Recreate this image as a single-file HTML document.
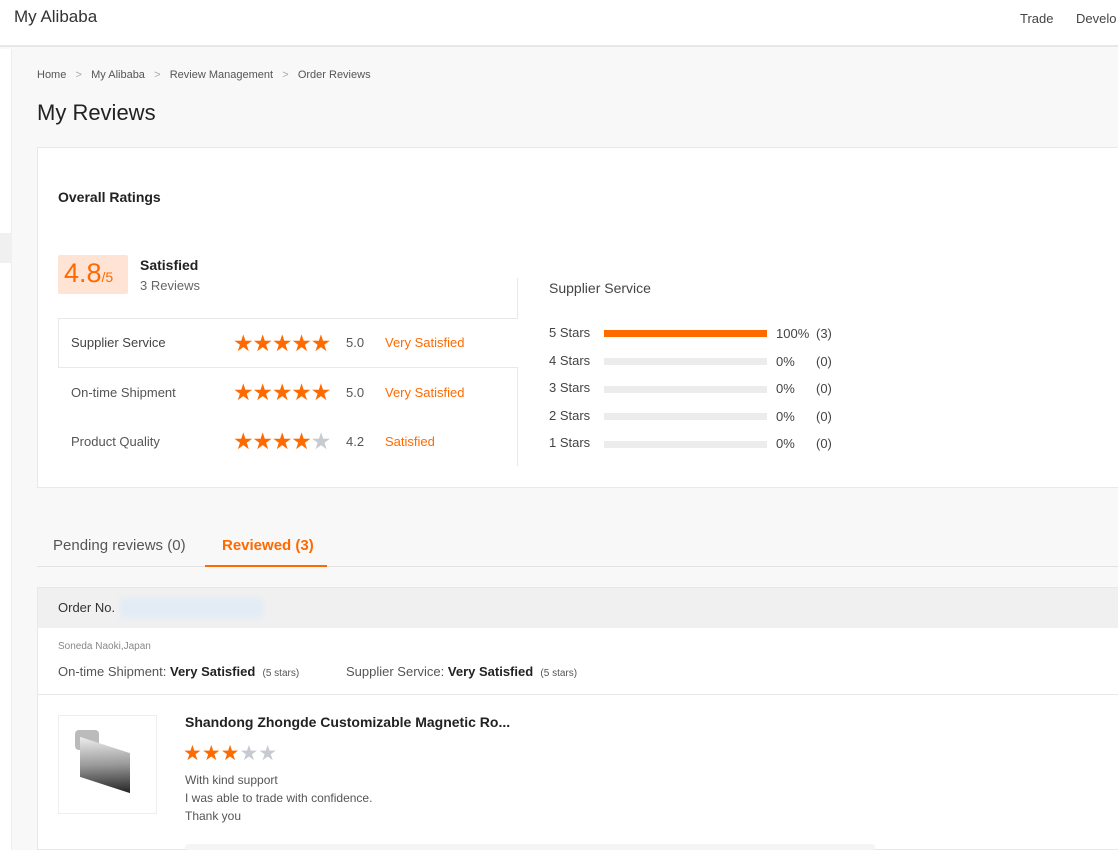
<!DOCTYPE html>
<html><head><meta charset="utf-8"><style>
*{margin:0;padding:0;box-sizing:border-box}
body{width:1118px;height:850px;overflow:hidden;background:#f8f8f8;font-family:"Liberation Sans",Arial,sans-serif;color:#333;position:relative}
.a{position:absolute;white-space:nowrap}
.st{color:#ff6a00;font-size:23px;letter-spacing:-1.2px;line-height:22px}
.g{color:#c8cad2}
.bar{position:absolute;left:604px;width:163px;height:7px;background:#ececec}
</style></head><body>
<div class="a" style="left:0;top:0;width:1118px;height:47px;background:#fff;border-bottom:2px solid #e8e8e8"></div>
<div class="a" style="left:14px;top:7px;font-size:17px;color:#333">My Alibaba</div>
<div class="a" style="left:1020px;top:11px;font-size:13px;color:#444">Trade</div>
<div class="a" style="left:1076px;top:11px;font-size:13px;color:#444">Develo</div>
<div class="a" style="left:0;top:49px;width:12px;height:801px;background:#fff;border-right:1px solid #eee"></div>
<div class="a" style="left:0;top:233px;width:12px;height:30px;background:#f0f0f0"></div>
<div class="a" style="left:37px;top:69px;font-size:11px;color:#555">Home&nbsp;&nbsp;&nbsp;<span style="color:#aaa">&gt;</span>&nbsp;&nbsp;&nbsp;My Alibaba&nbsp;&nbsp;&nbsp;<span style="color:#aaa">&gt;</span>&nbsp;&nbsp;&nbsp;Review Management&nbsp;&nbsp;&nbsp;<span style="color:#aaa">&gt;</span>&nbsp;&nbsp;&nbsp;Order Reviews</div>
<div class="a" style="left:37px;top:100px;font-size:22px;color:#222">My Reviews</div>
<div class="a" style="left:37px;top:147px;width:1081px;height:341px;background:#fff;border:1px solid #e8e8e8;border-right:none"></div>
<div class="a" style="left:58px;top:189px;font-size:14px;font-weight:bold;color:#222">Overall Ratings</div>
<div class="a" style="left:58px;top:255px;width:70px;height:39px;background:#ffe4d6;border-radius:2px"></div>
<div class="a" style="left:64px;top:258px;font-size:27px;color:#ff6a00">4.8<span style="font-size:14px">/5</span></div>
<div class="a" style="left:140px;top:257px;font-size:14px;font-weight:bold;color:#222">Satisfied</div>
<div class="a" style="left:140px;top:278px;font-size:13px;color:#666">3 Reviews</div>
<div class="a" style="left:517px;top:278px;width:1px;height:188px;background:#e8e8e8"></div>
<div class="a" style="left:58px;top:318px;width:460px;height:50px;border:1px solid #e8e8e8;border-right:none;background:#fff"></div>
<div class="a" style="left:71px;top:335px;font-size:13px;color:#444">Supplier Service</div>
<div class="a" style="left:71px;top:385px;font-size:13px;color:#555">On-time Shipment</div>
<div class="a" style="left:71px;top:434px;font-size:13px;color:#555">Product Quality</div>
<div class="a st" style="left:233px;top:332px">★★★★★</div>
<div class="a st" style="left:233px;top:381px">★★★★★</div>
<div class="a st" style="left:233px;top:430px">★★★★<span class="g">★</span></div>
<div class="a" style="left:346px;top:335px;font-size:13px;color:#555">5.0</div>
<div class="a" style="left:346px;top:385px;font-size:13px;color:#555">5.0</div>
<div class="a" style="left:346px;top:434px;font-size:13px;color:#555">4.2</div>
<div class="a" style="left:385px;top:335px;font-size:13px;color:#ff6a00">Very Satisfied</div>
<div class="a" style="left:385px;top:385px;font-size:13px;color:#ff6a00">Very Satisfied</div>
<div class="a" style="left:385px;top:434px;font-size:13px;color:#ff6a00">Satisfied</div>
<div class="a" style="left:549px;top:280px;font-size:14px;color:#444">Supplier Service</div>
<div class="a" style="left:549px;top:319px;font-size:13px;color:#444;line-height:27.6px">5 Stars<br>4 Stars<br>3 Stars<br>2 Stars<br>1 Stars</div>
<div class="bar" style="top:330px;background:#ff6a00"></div>
<div class="bar" style="top:358px"></div>
<div class="bar" style="top:386px"></div>
<div class="bar" style="top:413px"></div>
<div class="bar" style="top:441px"></div>
<div class="a" style="left:776px;top:320px;font-size:13px;color:#444;line-height:27.6px">100%<br>0%<br>0%<br>0%<br>0%</div>
<div class="a" style="left:816px;top:320px;font-size:13px;color:#444;line-height:27.6px">(3)<br>(0)<br>(0)<br>(0)<br>(0)</div>
<div class="a" style="left:37px;top:566px;width:1081px;height:1px;background:#e2e2e2"></div>
<div class="a" style="left:53px;top:537px;font-size:15px;color:#555">Pending reviews (0)</div>
<div class="a" style="left:222px;top:537px;font-size:15px;color:#ff6a00;font-weight:bold">Reviewed (3)</div>
<div class="a" style="left:205px;top:565px;width:122px;height:2px;background:#ff6a00"></div>
<div class="a" style="left:37px;top:587px;width:1081px;height:263px;background:#fff;border:1px solid #e8e8e8;border-right:none"></div>
<div class="a" style="left:38px;top:588px;width:1080px;height:40px;background:#f0f0f0"></div>
<div class="a" style="left:58px;top:600px;font-size:13px;color:#333">Order No.</div>
<div class="a" style="left:120px;top:598px;width:143px;height:20px;background:#e3ecf5;filter:blur(2px)"></div>
<div class="a" style="left:58px;top:641px;font-size:10px;color:#888">Soneda Naoki,Japan</div>
<div class="a" style="left:58px;top:664px;font-size:13px;color:#555">On-time Shipment: <b style="color:#222">Very Satisfied</b> &nbsp;<span style="font-size:10px">(5 stars)</span></div>
<div class="a" style="left:346px;top:664px;font-size:13px;color:#555">Supplier Service: <b style="color:#222">Very Satisfied</b> &nbsp;<span style="font-size:10px">(5 stars)</span></div>
<div class="a" style="left:38px;top:694px;width:1080px;height:1px;background:#e8e8e8"></div>
<div class="a" style="left:58px;top:715px;width:99px;height:99px;border:1px solid #eee;background:#fff"></div>
<div class="a" style="left:75px;top:730px;width:24px;height:20px;background:#bbb;border-radius:4px"></div>
<div class="a" style="left:80px;top:745px;width:50px;height:40px;background:linear-gradient(160deg,#eee,#999 50%,#222);transform:skewY(18deg)"></div>
<div class="a" style="left:185px;top:714px;font-size:14px;font-weight:bold;color:#222">Shandong Zhongde Customizable Magnetic Ro...</div>
<div class="a st" style="left:183px;top:743px;font-size:21px;letter-spacing:0">★★★<span class="g">★★</span></div>
<div class="a" style="left:185px;top:771px;font-size:12px;color:#555;line-height:18px">With kind support<br>I was able to trade with confidence.<br>Thank you</div>
<div class="a" style="left:185px;top:844px;width:690px;height:6px;background:#f5f5f5;border-radius:4px"></div>
</body></html>
